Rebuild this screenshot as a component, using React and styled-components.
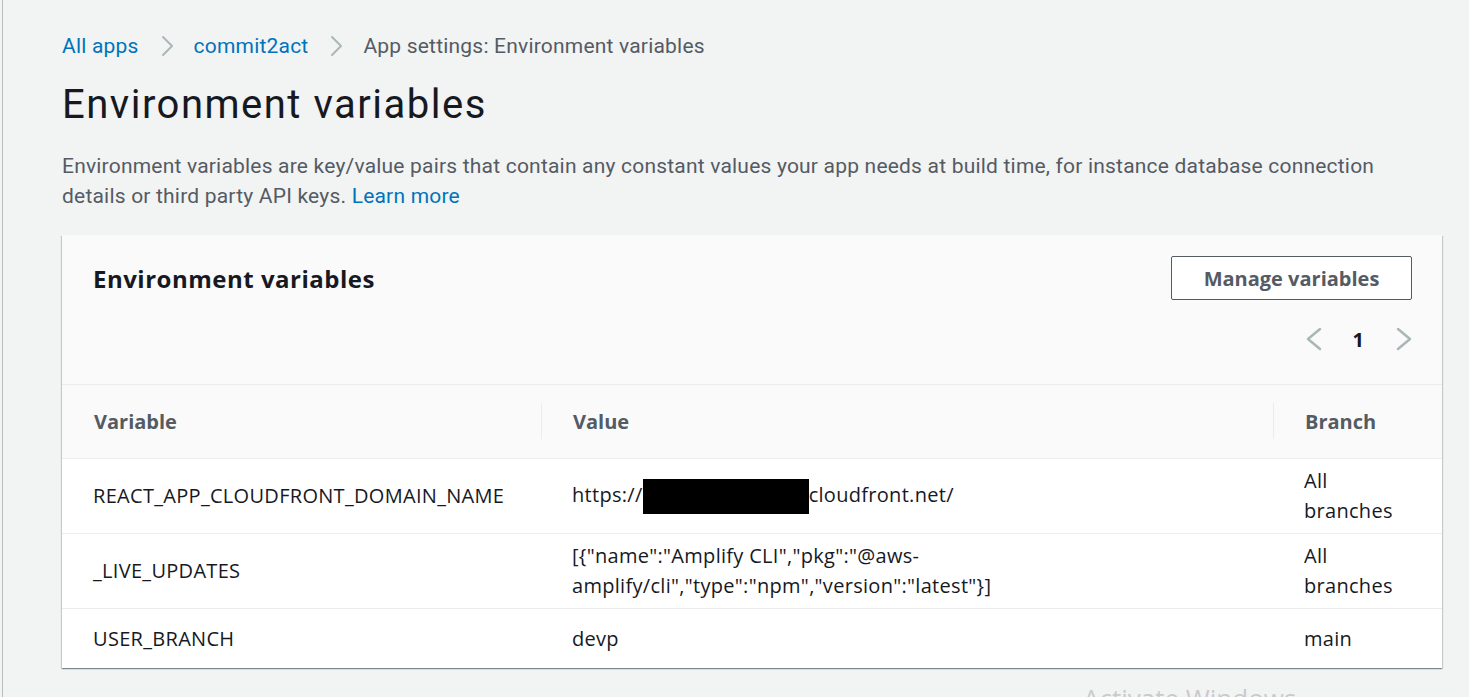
import React from 'react';
import styled, { createGlobalStyle } from 'styled-components';

const GlobalStyle = createGlobalStyle`
  html, body { margin: 0; padding: 0; background: #f2f3f3; }
  body { font-family: "Open Sans", "Liberation Sans", sans-serif; color: #16191f; }
  * { box-sizing: border-box; }
`;

const Page = styled.div`
  position: relative;
  height: 697px;
  overflow: hidden;
  margin-left: 2px;
  border-left: 1px solid #b9bfc0;
  padding: 31px 27px 0 59px;
`;

const Crumbs = styled.nav`
  display: flex;
  align-items: center;
  height: 30px;
  font-family: Roboto, "Liberation Sans", sans-serif;
  font-size: 21px;
  letter-spacing: 0.2px;
  color: #545b64;
`;

const CrumbLink = styled.a`
  color: #0073bb;
  text-decoration: none;
`;

const CrumbSep = styled.span`
  display: inline-flex;
  margin: 0 20px 0 22px;
`;

const Title = styled.h1`
  margin: 20px 0 0;
  font-family: Roboto, "Liberation Sans", sans-serif;
  font-weight: 400;
  font-size: 40px;
  letter-spacing: 1.5px;
  line-height: 48px;
  color: #16191f;
`;

const Intro = styled.p`
  margin: 22px 0 0;
  font-family: Roboto, "Liberation Sans", sans-serif;
  font-size: 21px;
  letter-spacing: 0.2px;
  line-height: 30px;
  color: #545b64;
  a { color: #0073bb; text-decoration: none; }
`;

const Card = styled.section`
  margin-top: 24px;
  width: 1380px;
  background: #fff;
  box-shadow: 0 1px 1px 0 rgba(0, 28, 36, 0.3), 1px 1px 1px 0 rgba(0, 28, 36, 0.15), -1px 1px 1px 0 rgba(0, 28, 36, 0.15);
`;

const CardHead = styled.header`
  background: #fafafa;
  padding: 21px 30px 30px 31px;
  border-bottom: 1px solid #eaeded;
`;

const HeadRow = styled.div`
  display: flex;
  align-items: center;
  justify-content: space-between;
`;

const CardTitle = styled.h2`
  margin: 0;
  font-size: 24px;
  letter-spacing: 0.5px;
  font-weight: 700;
  color: #16191f;
`;

const Button = styled.button`
  height: 44px;
  width: 241px;
  background: #fff;
  border: 1px solid #545b64;
  border-radius: 2px;
  font-family: "Open Sans", "Liberation Sans", sans-serif;
  font-weight: 700;
  font-size: 20px;
  color: #545b64;
  cursor: pointer;
`;

const Pager = styled.div`
  display: flex;
  align-items: center;
  justify-content: flex-end;
  height: 30px;
  margin-top: 24px;
`;

const PageNum = styled.span`
  font-weight: 700;
  font-size: 20px;
  color: #16191f;
  margin: 0 32px 0 31px;
`;

const Row = styled.div`
  display: grid;
  grid-template-columns: 479px 732px 1fr;
  border-bottom: ${p => (p.$last ? 'none' : '1px solid #eaeded')};
  background: ${p => (p.$head ? '#fafafa' : '#fff')};
  min-height: ${p => (p.$last ? '59px' : '74px')};
`;

const HeadCell = styled.div`
  position: relative;
  display: flex;
  align-items: center;
  padding-left: 32px;
  font-weight: 700;
  font-size: 20px;
  color: #545b64;
  &::before {
    content: '';
    display: ${p => (p.$first ? 'none' : 'block')};
    position: absolute;
    left: 0;
    top: 18px;
    bottom: 19px;
    border-left: 1px solid #eaeded;
  }
`;

const Cell = styled.div`
  display: flex;
  align-items: center;
  padding: 7px 32px 7px 31px;
  font-size: 20px;
  letter-spacing: 0.3px;
  line-height: 30px;
  color: #16191f;
`;

const Wrap = styled.span`
  max-width: ${p => p.$max || 'none'};
`;

const Redacted = styled.span`
  display: inline-block;
  width: 166px;
  height: 35px;
  background: #000;
  vertical-align: middle;
`;

const Watermark = styled.div`
  position: absolute;
  left: 1080px;
  top: 680px;
  font-family: "Open Sans", sans-serif;
  font-size: 26px;
  color: rgba(150, 150, 150, 0.45);
  pointer-events: none;
`;

function Chevron({ dir = 'right', w = 13, h = 22, stroke = 2, color = '#aab7b8' }) {
  const d = dir === 'right'
    ? `M2 2 L${w - 2} ${h / 2} L2 ${h - 2}`
    : `M${w - 2} 2 L2 ${h / 2} L${w - 2} ${h - 2}`;
  return (
    <svg width={w} height={h} viewBox={`0 0 ${w} ${h}`} fill="none">
      <path d={d} stroke={color} strokeWidth={stroke} strokeLinecap="round" strokeLinejoin="round" />
    </svg>
  );
}

const rows = [
  { name: 'REACT_APP_CLOUDFRONT_DOMAIN_NAME', value: 'cf', branch: 'All branches' },
  { name: '_LIVE_UPDATES', value: '[{"name":"Amplify CLI","pkg":"@aws-amplify/cli","type":"npm","version":"latest"}]', branch: 'All branches' },
  { name: 'USER_BRANCH', value: 'devp', branch: 'main' },
];

export default function App() {
  return (
    <>
      <GlobalStyle />
      <Page>
        <Crumbs>
          <CrumbLink href="#">All apps</CrumbLink>
          <CrumbSep><Chevron /></CrumbSep>
          <CrumbLink href="#">commit2act</CrumbLink>
          <CrumbSep><Chevron /></CrumbSep>
          <span>App settings: Environment variables</span>
        </Crumbs>
        <Title>Environment variables</Title>
        <Intro>
          Environment variables are key/value pairs that contain any constant values your app needs at build time, for instance database connection
          details or third party API keys. <a href="#">Learn more</a>
        </Intro>
        <Card>
          <CardHead>
            <HeadRow>
              <CardTitle>Environment variables</CardTitle>
              <Button>Manage variables</Button>
            </HeadRow>
            <Pager>
              <Chevron dir="left" w={16} h={24} stroke={2.5} />
              <PageNum>1</PageNum>
              <Chevron dir="right" w={16} h={24} stroke={2.5} />
            </Pager>
          </CardHead>
          <Row $head>
            <HeadCell $first>Variable</HeadCell>
            <HeadCell>Value</HeadCell>
            <HeadCell>Branch</HeadCell>
          </Row>
          {rows.map((r, i) => (
            <Row key={r.name} $last={i === rows.length - 1}>
              <Cell>{r.name}</Cell>
              <Cell>
                {r.value === 'cf' ? (
                  <span>https://<Redacted />cloudfront.net/</span>
                ) : (
                  <Wrap $max="430px">{r.value}</Wrap>
                )}
              </Cell>
              <Cell>{r.branch}</Cell>
            </Row>
          ))}
        </Card>
        <Watermark>Activate Windows</Watermark>
      </Page>
    </>
  );
}
